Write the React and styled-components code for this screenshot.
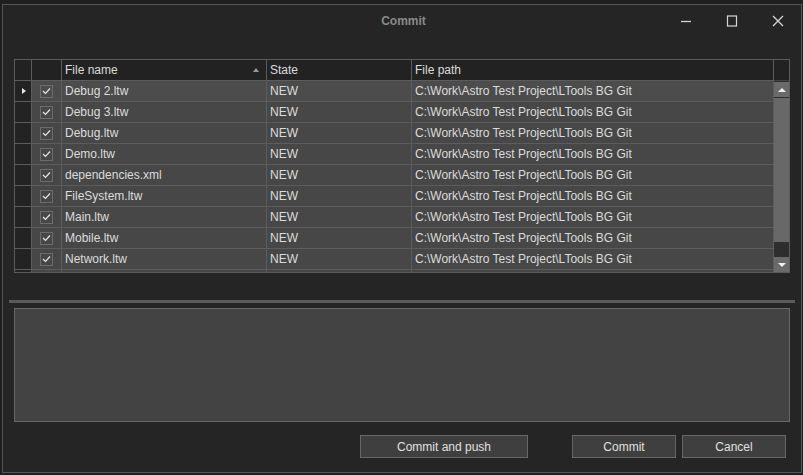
import React from "react";
import styled, { createGlobalStyle } from "styled-components";

const files = [
  "Debug 2.ltw",
  "Debug 3.ltw",
  "Debug.ltw",
  "Demo.ltw",
  "dependencies.xml",
  "FileSystem.ltw",
  "Main.ltw",
  "Mobile.ltw",
  "Network.ltw",
];

const PATH = "C:\\Work\\Astro Test Project\\LTools BG Git";
const COLS = "17px 30px 205px 145px 1fr";

const GlobalStyle = createGlobalStyle`
  html, body {
    margin: 0;
    padding: 0;
    background: #1f1f1f;
    font-family: "Liberation Sans", Arial, sans-serif;
    font-size: 12px;
    color: #dcdcdc;
  }
`;

const Page = styled.div`
  width: 803px;
  height: 475px;
  padding: 4px 1px 2px 2px;
  box-sizing: border-box;
  display: flex;
`;

const Window = styled.div`
  flex: 1;
  display: flex;
  flex-direction: column;
  background: #252525;
  border: 1px solid #555;
  box-sizing: border-box;
`;

const TitleBar = styled.div`
  height: 32px;
  display: flex;
  align-items: center;
  justify-content: center;
  position: relative;
`;

const Title = styled.div`
  font-weight: bold;
  color: #8a8a8a;
  font-size: 12px;
  margin-left: 3px;
`;

const Controls = styled.div`
  position: absolute;
  right: 13px;
  top: 10px;
  display: flex;
  gap: 26px;
`;

const Ctl = styled.svg`
  width: 20px;
  height: 12px;
  stroke: #d6d6d6;
  fill: none;
`;

const Body = styled.div`
  flex: 1;
  display: flex;
  flex-direction: column;
  padding: 22px 11px 0 11px;
`;

const GridFrame = styled.div`
  height: 214px;
  box-sizing: border-box;
  border: 1px solid #5c5c5c;
  display: flex;
  overflow: hidden;
`;

const Rows = styled.div`
  flex: 1;
  overflow: hidden;
`;

const Row = styled.div`
  display: grid;
  grid-template-columns: ${COLS};
  height: 21px;
  box-sizing: border-box;
  border-bottom: 1px solid #5c5c5c;
  background: ${(p) => (p.$header ? "#222" : p.$current ? "#4c4c4c" : "#474747")};
`;

const Cell = styled.div`
  border-right: 1px solid #5c5c5c;
  padding-left: ${(p) => (p.$pad ? "3px" : "0")};
  display: flex;
  align-items: center;
  justify-content: ${(p) => (p.$center ? "center" : "flex-start")};
  white-space: nowrap;
  overflow: hidden;
  position: relative;
  background: ${(p) => (p.$dark ? "#232323" : "transparent")};
  &:last-child {
    border-right: none;
  }
`;

const SortArrow = styled.span`
  position: absolute;
  right: 7px;
  top: 8px;
  width: 0;
  height: 0;
  border-left: 3.5px solid transparent;
  border-right: 3.5px solid transparent;
  border-bottom: 4px solid #9a9a9a;
`;

const RowMarker = styled.span`
  width: 0;
  height: 0;
  margin-left: 2px;
  border-top: 3.5px solid transparent;
  border-bottom: 3.5px solid transparent;
  border-left: 4px solid #e8e8e8;
`;

const Check = styled.div`
  width: 13px;
  height: 13px;
  box-sizing: border-box;
  border: 1px solid #6c6c6c;
  display: flex;
  align-items: center;
  justify-content: center;
`;

const ScrollCol = styled.div`
  width: 15px;
  display: flex;
  flex-direction: column;
  border-left: 1px solid #5c5c5c;
`;

const ScrollHead = styled.div`
  height: 21px;
  flex: none;
  background: #222;
  border-bottom: 1px solid #444;
  box-sizing: border-box;
`;

const Track = styled.div`
  flex: 1;
  background: #2e2e2e;
  display: flex;
  flex-direction: column;
  gap: 1px;
  padding: 1px 0 0 0;
`;

const ScrollBtn = styled.div`
  height: 15px;
  background: #6a6a6a;
  display: flex;
  align-items: center;
  justify-content: center;
  margin-top: ${(p) => (p.$bottom ? "auto" : "0")};
`;

const Thumb = styled.div`
  height: 144px;
  background: #686868;
`;

const Tri = styled.span`
  width: 0;
  height: 0;
  border-left: 4px solid transparent;
  border-right: 4px solid transparent;
  ${(p) =>
    p.$down
      ? "border-top: 4px solid #f0f0f0;"
      : "border-bottom: 4px solid #f0f0f0;"}
`;

const Splitter = styled.div`
  height: 3px;
  background: #5a5a5a;
  margin: 27px -5px 5px -5px;
`;

const Message = styled.textarea`
  height: 114px;
  box-sizing: border-box;
  background: #434343;
  border: 1px solid #676767;
  resize: none;
  outline: none;
  color: #dcdcdc;
  font-family: inherit;
`;

const Footer = styled.div`
  display: flex;
  justify-content: flex-end;
  padding: 13px 4px 0 0;
  gap: 6px;
`;

const Button = styled.button`
  width: ${(p) => p.$w}px;
  height: 23px;
  margin-right: ${(p) => (p.$space ? "38px" : "0")};
  background: #3f3f3f;
  border: 1px solid #686868;
  color: #e0e0e0;
  font-family: inherit;
  font-size: 12px;
  padding: 0;
`;

const CheckBox = () => (
  <Check>
    <svg width="9" height="8" viewBox="0 0 9 8">
      <path d="M1 4 L3.5 6.5 L8 1.5" stroke="#e6e6e6" strokeWidth="1.2" fill="none" />
    </svg>
  </Check>
);

export default function App() {
  return (
    <Page>
      <GlobalStyle />
      <Window>
        <TitleBar>
          <Title>Commit</Title>
          <Controls>
            <Ctl viewBox="0 0 20 12">
              <path d="M5 6.5 H15" strokeWidth="1.3" />
            </Ctl>
            <Ctl viewBox="0 0 20 12">
              <rect x="5.5" y="1" width="9" height="10" strokeWidth="1.2" />
            </Ctl>
            <Ctl viewBox="0 0 20 12">
              <path d="M5 1 L15 11 M15 1 L5 11" strokeWidth="1.3" />
            </Ctl>
          </Controls>
        </TitleBar>
        <Body>
          <GridFrame>
            <Rows>
              <Row $header>
                <Cell />
                <Cell />
                <Cell $pad>
                  File name
                  <SortArrow />
                </Cell>
                <Cell $pad>State</Cell>
                <Cell $pad>File path</Cell>
              </Row>
              {files.map((f, i) => (
                <Row key={f} $current={i === 0}>
                  <Cell $dark $center>
                    {i === 0 && <RowMarker />}
                  </Cell>
                  <Cell $center>
                    <CheckBox />
                  </Cell>
                  <Cell $pad>{f}</Cell>
                  <Cell $pad>NEW</Cell>
                  <Cell $pad>{PATH}</Cell>
                </Row>
              ))}
              {/* next row, scrolled out of view */}
              <Row>
                <Cell $dark />
                <Cell />
                <Cell />
                <Cell />
                <Cell />
              </Row>
            </Rows>
            <ScrollCol>
              <ScrollHead />
              <Track>
                <ScrollBtn>
                  <Tri />
                </ScrollBtn>
                <Thumb />
                <ScrollBtn $bottom>
                  <Tri $down />
                </ScrollBtn>
              </Track>
            </ScrollCol>
          </GridFrame>
          <Splitter />
          <Message />
          <Footer>
            <Button $w={168} $space>
              Commit and push
            </Button>
            <Button $w={104}>Commit</Button>
            <Button $w={104}>Cancel</Button>
          </Footer>
        </Body>
      </Window>
    </Page>
  );
}
